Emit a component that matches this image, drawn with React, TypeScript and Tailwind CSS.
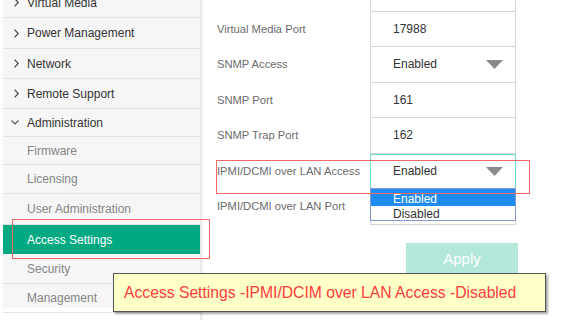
import React from "react";

const font = { fontFamily: '"Liberation Sans", Arial, sans-serif' };

const Chevron = ({ open }: { open?: boolean }) =>
  open ? (
    <svg width="8" height="5" viewBox="0 0 8 5" className="ml-[8px] mr-[11px]">
      <path d="M0.5 0.5 L4 4 L7.5 0.5" fill="none" stroke="#555" strokeWidth="1.1" />
    </svg>
  ) : (
    <svg width="5" height="9" viewBox="0 0 5 9" className="ml-[11px] mr-[11px]">
      <path d="M0.6 0.6 L4.2 4.5 L0.6 8.4" fill="none" stroke="#444" strokeWidth="1.2" />
    </svg>
  );

const Arrow = () => (
  <svg width="17" height="9" viewBox="0 0 17 9">
    <path d="M0 0 H17 L8.5 9 Z" fill="#8a8a8a" />
  </svg>
);

type NavItem = { label: string; h: string; kind: "main" | "open" | "sub" | "active" };

const nav: NavItem[] = [
  { label: "Virtual Media", h: "h-[30px]", kind: "main" },
  { label: "Power Management", h: "h-[31px]", kind: "main" },
  { label: "Network", h: "h-[30px]", kind: "main" },
  { label: "Remote Support", h: "h-[30px]", kind: "main" },
  { label: "Administration", h: "h-[28px]", kind: "open" },
  { label: "Firmware", h: "h-[28px]", kind: "sub" },
  { label: "Licensing", h: "h-[29px]", kind: "sub" },
  { label: "User Administration", h: "h-[31px]", kind: "sub" },
  { label: "Access Settings", h: "h-[29px]", kind: "active" },
  { label: "Security", h: "h-[30px]", kind: "sub" },
  { label: "Management", h: "h-[29px]", kind: "sub" },
];

type Field = { label: string; value: string; select?: boolean; focus?: boolean };

const fields: Field[] = [
  { label: "", value: "" },
  { label: "Virtual Media Port", value: "17988" },
  { label: "SNMP Access", value: "Enabled", select: true },
  { label: "SNMP Port", value: "161" },
  { label: "SNMP Trap Port", value: "162" },
  { label: "IPMI/DCMI over LAN Access", value: "Enabled", select: true, focus: true },
  { label: "IPMI/DCMI over LAN Port", value: "" },
];

export default function App() {
  return (
    <div className="relative flex w-[567px] h-[320px] overflow-hidden bg-white" style={font}>
      {/* side menu */}
      <div className="w-[204px] h-full flex shrink-0">
        <div className="w-[200px] h-full pl-[3px] bg-white">
          <div className="h-full bg-[#f6f6f6] -mt-[12px]">
            {nav.map((item) => (
              <div
                key={item.label}
                className={
                  item.kind === "active"
                    ? `${item.h} flex items-center bg-[#01a982] text-white text-[12px] pl-[24px]`
                    : `${item.h} flex items-center border-b border-[#e3e3e3] text-[12px] ${
                        item.kind === "sub" ? "pl-[24px] text-[#858585]" : "text-[#333]"
                      }`
                }
              >
                {item.kind === "main" && <Chevron />}
                {item.kind === "open" && <Chevron open />}
                <span className={item.kind === "main" || item.kind === "open" ? "-ml-[3px]" : ""}>
                  {item.label}
                </span>
              </div>
            ))}
          </div>
        </div>
        <div className="w-[4px] h-full bg-gradient-to-r from-[#e4e4e4] to-white" />
      </div>

      {/* form */}
      <div className="flex-1 pl-[13px] -mt-[24px]">
        {fields.map((f) => (
          <div key={f.label || "top"} className="flex items-center h-[35.5px]">
            <div className="w-[153px] text-[11.2px] text-[#6b6b6b]">{f.label}</div>
            <div
              className={`relative w-[146px] h-full flex items-center justify-between pl-[22px] pr-[12px] text-[12px] text-[#333] ${
                f.focus
                  ? "border border-[#6fdccf]"
                  : "border-x border-b border-[#d6d6d6]"
              }`}
            >
              <span>{f.value}</span>
              {f.select && <Arrow />}
              {f.focus && (
                <div className="absolute left-[-1px] top-full w-[146px] h-[33px] border border-[#8797d6] bg-white z-10 text-[12px] leading-[14px]">
                  <div className="h-[17px] bg-[#1e8cf2] text-white pl-[22px] flex items-end overflow-hidden">Enabled</div>
                  <div className="h-[15px] text-[#333] pl-[22px] flex items-center">Disabled</div>
                </div>
              )}
            </div>
          </div>
        ))}
        <div className="ml-[189px] mt-[18px] w-[112px] h-[34px] bg-[#b3e8db] text-white text-[15px] flex items-center justify-center">
          Apply
        </div>
      </div>

      {/* annotations */}
      <div className="absolute left-[12px] top-[219px] w-[198px] h-[40px] border border-[#f06a6a]" />
      <div className="absolute left-[216px] top-[160px] w-[314px] h-[34px] border border-[#f06a6a] z-20" />
      <div className="absolute left-[113px] top-[273px] w-[433px] h-[39px] bg-[#ffffc8] border border-[#555] shadow-[2px_2px_2px_rgba(0,0,0,0.35)] flex items-center pl-[10px] text-[15.7px] text-[#ff3c3c] z-30">
        Access Settings -IPMI/DCIM over LAN Access -Disabled
      </div>
    </div>
  );
}
